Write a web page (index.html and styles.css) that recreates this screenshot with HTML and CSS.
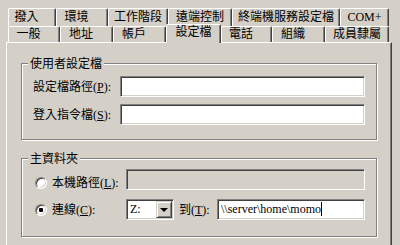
FILE: index.html
```html
<!DOCTYPE html>
<html lang="zh-Hant">

<head>
    <meta charset="utf-8">
    <title>內容</title>
    <link rel="stylesheet" href="styles.css">
</head>

<body>
    <div class="dialog">
        <div class="tab-row back">
            <div class="tab narrow">撥入</div>
            <div class="tab narrow">環境</div>
            <div class="tab">工作階段</div>
            <div class="tab">遠端控制</div>
            <div class="tab">終端機服務設定檔</div>
            <div class="tab">COM+</div>
        </div>
        <div class="tab-row front">
            <div class="tab narrow">一般</div>
            <div class="tab narrow">地址</div>
            <div class="tab narrow">帳戶</div>
            <div class="tab active">設定檔</div>
            <div class="tab narrow">電話</div>
            <div class="tab narrow">組織</div>
            <div class="tab">成員隸屬</div>
        </div>

        <section class="panel">
            <fieldset class="group">
                <legend>使用者設定檔</legend>
                <div class="group-body">
                    <div class="field">
                        <label>設定檔路徑(<u>P</u>):</label>
                        <div class="edit"></div>
                    </div>
                    <div class="field">
                        <label>登入指令檔(<u>S</u>):</label>
                        <div class="edit"></div>
                    </div>
                </div>
            </fieldset>

            <fieldset class="group second">
                <legend>主資料夾</legend>
                <div class="group-body home">
                    <div class="option first">
                        <span class="choice"><span class="radio"></span>本機路徑(<u>L</u>):</span>
                        <div class="edit disabled"></div>
                    </div>
                    <div class="option">
                        <span class="choice"><span class="radio checked"></span>連線(<u>C</u>):</span>
                        <div class="combo">
                            <span class="combo-text">Z:</span>
                            <span class="drop"></span>
                        </div>
                        <span class="to">到(<u>T</u>):</span>
                        <div class="edit"><span class="value">\\server\home\momo</span><span class="caret"></span></div>
                    </div>
                </div>
            </fieldset>
        </section>
    </div>
</body>

</html>
```

FILE: styles.css
```css
/**** GENERELT ****/

body {
    margin: 0;
    background-color: #d4d0c8;
    font-family: "Liberation Serif", "Noto Sans CJK TC", serif;
    font-size: 12px;
    line-height: 14px;
    color: #000;
    overflow: hidden;
}

u {
    text-decoration: underline;
}

.dialog {
    padding: 8px 8px 0 6px;
}

/**** FANER ****/

.tab-row {
    display: flex;
    padding-left: 2px;
}

.tab-row.back {
    height: 18px;
}

.tab-row.front {
    height: 16px;
}

.tab {
    box-sizing: border-box;
    height: 18px;
    padding-top: 1px;
    border: 1px solid #fff;
    border-right-color: #404040;
    border-bottom: none;
    border-radius: 2px 2px 0 0;
    box-shadow: inset -1px 0 #808080;
    text-align: center;
    white-space: nowrap;
}

.tab.narrow {
    padding-right: 11px;
}

.back .tab:nth-child(1) { width: 48px; }
.back .tab:nth-child(2) { width: 52px; }
.back .tab:nth-child(3) { width: 60px; }
.back .tab:nth-child(4) { width: 64px; }
.back .tab:nth-child(5) { width: 108px; }
.back .tab:nth-child(6) { width: 49px; }

.front .tab {
    height: 16px;
    padding-top: 0;
}

.front .tab:nth-child(1) { width: 52px; }
.front .tab:nth-child(2) { width: 53px; }
.front .tab:nth-child(3) { width: 53px; }
.front .tab:nth-child(4) { width: 55px; }
.front .tab:nth-child(5) { width: 51px; }
.front .tab:nth-child(6) { width: 53px; }
.front .tab:nth-child(7) { width: 64px; }

.front .tab.active {
    height: 19px;
    margin-top: -2px;
    position: relative;
    z-index: 1;
    background-color: #d4d0c8;
}

/**** PANEL ****/

.panel {
    height: 189px;
    padding: 13px 14px 0 14px;
    border: 1px solid #fff;
    border-right-color: #404040;
    border-bottom: none;
    box-shadow: inset -1px 0 #808080;
}

.group {
    margin: 0;
    padding: 0;
    border: 1px solid #808080;
    box-shadow: inset 1px 1px #fff, 1px 1px #fff;
    min-inline-size: 0;
}

.group.second {
    margin-top: 11px;
}

.group legend {
    margin-left: 6px;
    padding: 0 2px;
    background-color: #d4d0c8;
    font-family: "Noto Sans CJK TC", sans-serif;
}

.group-body {
    display: flex;
    flex-direction: column;
    gap: 7px;
    padding: 6px 11px 14px 11px;
}

.group-body.home {
    gap: 9px;
    padding: 4px 11px 16px 13px;
}

.field,
.option {
    display: flex;
    align-items: center;
    height: 21px;
}

.field label {
    width: 87px;
    flex-shrink: 0;
}

/**** FELTER ****/

.edit {
    flex: 1;
    box-sizing: border-box;
    height: 21px;
    padding: 2px 0 0 3px;
    background-color: #fff;
    border: 1px solid;
    border-color: #808080 #fff #fff #808080;
    box-shadow: inset 1px 1px #404040, inset -1px -1px #d4d0c8;
    white-space: nowrap;
}

.edit.disabled {
    background-color: #d4d0c8;
}

.caret {
    display: inline-block;
    width: 1px;
    height: 14px;
    background-color: #000;
    vertical-align: top;
}

.choice {
    display: flex;
    align-items: center;
    width: 91px;
    flex-shrink: 0;
}

.option.first .choice {
    padding-top: 6px;
}

.radio {
    box-sizing: border-box;
    width: 12px;
    height: 12px;
    margin-right: 5px;
    border: 1px solid;
    border-color: #808080 #fff #fff #808080;
    border-radius: 50%;
    box-shadow: inset 1px 1px #404040, inset -1px -1px #d4d0c8;
    background-color: #fff;
    position: relative;
}

.radio.checked::after {
    content: "";
    position: absolute;
    left: 3px;
    top: 3px;
    width: 4px;
    height: 4px;
    border-radius: 1px;
    background-color: #000;
}

.combo {
    display: flex;
    box-sizing: border-box;
    width: 48px;
    height: 21px;
    padding: 1px;
    background-color: #fff;
    border: 1px solid;
    border-color: #808080 #fff #fff #808080;
    box-shadow: inset 1px 1px #404040, inset -1px -1px #d4d0c8;
}

.combo-text {
    padding: 1px 0 0 2px;
}

.drop {
    box-sizing: border-box;
    width: 16px;
    height: 17px;
    margin-left: auto;
    background-color: #d4d0c8;
    border: 1px solid;
    border-color: #d4d0c8 #404040 #404040 #d4d0c8;
    box-shadow: inset 1px 1px #fff, inset -1px -1px #808080;
    position: relative;
}

.drop::after {
    content: "";
    position: absolute;
    left: 3px;
    top: 6px;
    border-left: 4px solid transparent;
    border-right: 4px solid transparent;
    border-top: 4px solid #000;
}

.to {
    width: 38px;
    margin-left: 5px;
    flex-shrink: 0;
}
```
